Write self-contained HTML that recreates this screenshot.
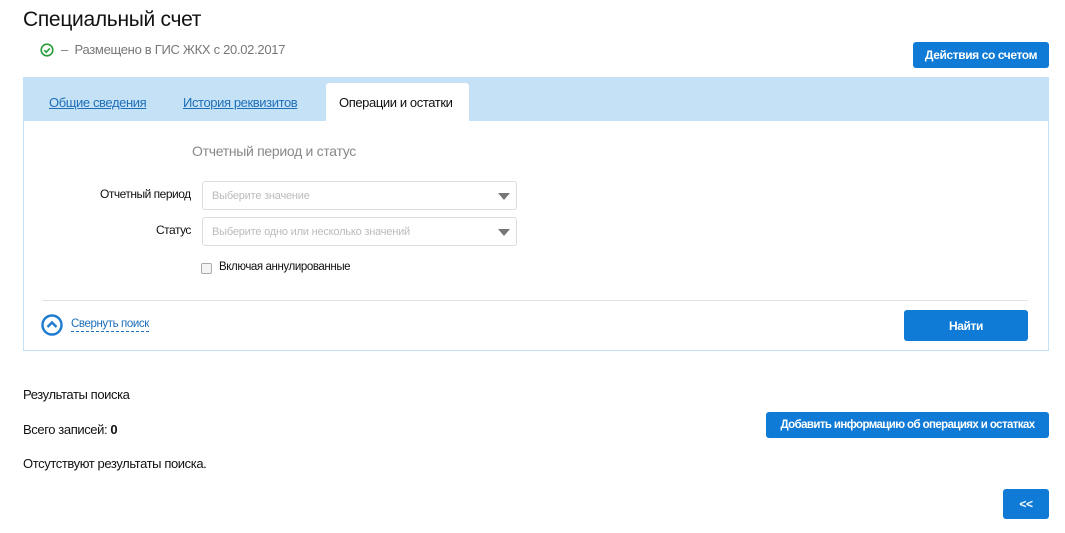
<!DOCTYPE html>
<html><head><meta charset="utf-8"><style>
body{margin:0;width:1065px;height:533px;background:#fff;font-family:"Liberation Sans",sans-serif;color:#222;position:relative;overflow:hidden}
.a{position:absolute;white-space:nowrap}
.btn{position:absolute;background:#0f7bd6;color:#fff;border-radius:3px;font-size:12px;font-weight:bold;display:flex;align-items:center;justify-content:center;white-space:nowrap;letter-spacing:-0.4px}
.sel{position:absolute;left:202px;width:315px;height:29px;border:1px solid #ddd;border-radius:3px;font-size:11px;color:#bbb;box-sizing:border-box;padding:8px 9px;letter-spacing:-0.2px}
.sel:after{content:"";position:absolute;right:6px;top:11px;border-left:6px solid transparent;border-right:6px solid transparent;border-top:7px solid #777}
</style></head><body>
<div class="a" style="left:23px;top:8px;font-size:21px;color:#111;letter-spacing:-0.3px">Специальный счет</div>
<svg class="a" style="left:40px;top:43px" width="14" height="14"><circle cx="7" cy="7" r="5.8" fill="none" stroke="#2a9d3a" stroke-width="1.6"/><path d="M4.3 7.2l2 2 3.5-3.8" fill="none" stroke="#2a9d3a" stroke-width="1.6"/></svg>
<div class="a" style="left:61px;top:42px;font-size:13px;color:#777;letter-spacing:-0.3px">–&nbsp; Размещено в ГИС ЖКХ с 20.02.2017</div>
<div class="btn" style="left:913px;top:42px;width:136px;height:26px">Действия со счетом</div>
<div class="a" style="left:23px;top:77px;width:1026px;height:44px;background:#c5e1f6"></div>
<div class="a" style="left:49px;top:95px;font-size:13px;color:#1e6fb8;text-decoration:underline;letter-spacing:-0.4px">Общие сведения</div>
<div class="a" style="left:183px;top:95px;font-size:13px;color:#1e6fb8;text-decoration:underline;letter-spacing:-0.4px">История реквизитов</div>
<div class="a" style="left:326px;top:83px;width:143px;height:38px;background:#fff;border-radius:3px 3px 0 0"></div>
<div class="a" style="left:339px;top:95px;font-size:13px;color:#111;letter-spacing:-0.4px">Операции и остатки</div>
<div class="a" style="left:23px;top:121px;width:1024px;height:229px;border:1px solid #c5e1f6;border-top:none"></div>
<div class="a" style="left:192px;top:143px;font-size:14px;color:#888;letter-spacing:-0.3px">Отчетный период и статус</div>
<div class="a" style="left:100px;top:187px;font-size:12px;color:#111;letter-spacing:-0.5px">Отчетный период</div>
<div class="sel" style="top:181px">Выберите значение</div>
<div class="a" style="left:156px;top:223px;font-size:12px;color:#111;letter-spacing:-0.5px">Статус</div>
<div class="sel" style="top:217px">Выберите одно или несколько значений</div>
<div class="a" style="left:201px;top:263px;width:9px;height:9px;border:1px solid #aaa;border-radius:2px;background:#f4f4f4"></div>
<div class="a" style="left:219px;top:261px;font-size:11.5px;color:#111;letter-spacing:-0.4px">Включая аннулированные</div>
<div class="a" style="left:42px;top:300px;width:986px;height:1px;background:#e2e2e2"></div>
<svg class="a" style="left:41px;top:314px" width="22" height="22"><circle cx="11" cy="11" r="9.5" fill="none" stroke="#1e7bd0" stroke-width="2.4"/><path d="M6.5 13l4.5-4.5 4.5 4.5" fill="none" stroke="#1e7bd0" stroke-width="2.4"/></svg>
<div class="a" style="left:71px;top:317px;font-size:11.5px;color:#1e6fb8;border-bottom:1px dashed #1e6fb8;line-height:14px;letter-spacing:-0.4px">Свернуть поиск</div>
<div class="btn" style="left:904px;top:310px;width:124px;height:31px">Найти</div>
<div class="a" style="left:23px;top:387px;font-size:13px;color:#111;letter-spacing:-0.4px">Результаты поиска</div>
<div class="a" style="left:23px;top:422px;font-size:13px;color:#111;letter-spacing:-0.4px">Всего записей: <b>0</b></div>
<div class="a" style="left:23px;top:456px;font-size:13px;color:#111;letter-spacing:-0.4px">Отсутствуют результаты поиска.</div>
<div class="btn" style="left:766px;top:412px;width:283px;height:26px;font-size:11.5px;letter-spacing:-0.6px">Добавить информацию об операциях и остатках</div>
<div class="btn" style="left:1003px;top:489px;width:46px;height:30px">&lt;&lt;</div>
</body></html>
